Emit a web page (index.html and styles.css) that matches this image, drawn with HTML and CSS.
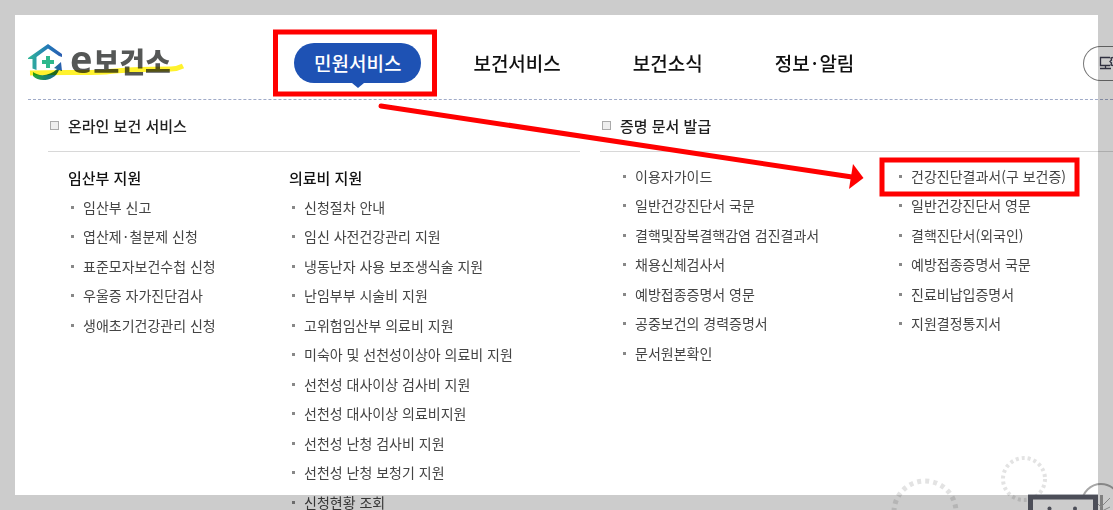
FILE: index.html
```html
<!DOCTYPE html>
<html lang="ko">
<head>
    <meta charset="UTF-8">
    <meta name="viewport" content="width=device-width, initial-scale=1">
    <title>e보건소</title>
    <link rel="stylesheet" href="styles.css">
</head>
<body>

    <header class="header">
        <a href="#" class="logo">
            <svg class="logo-mark" width="36" height="38" viewBox="0 0 36 38" aria-hidden="true">
                <defs>
                    <linearGradient id="roof" x1="0" x2="1"><stop offset="0" stop-color="#32b897"/><stop offset=".6" stop-color="#2277b8"/><stop offset="1" stop-color="#2a5cb0"/></linearGradient>
                    <linearGradient id="swoosh" x1="0" x2="1"><stop offset="0" stop-color="#2bab3c"/><stop offset=".5" stop-color="#167d75"/><stop offset="1" stop-color="#2a5fb4"/></linearGradient>
                </defs>
                <path d="M0 14L20 0L34 10V13L31 12L20 4.500L8.500 13V26L4.500 24.500V15H0Z" fill="url(#roof)"/>
                <path d="M18 12h4v4h4v4h-4v4h-4v-4h-4v-4h4Z" fill="#2eb88c"/>
                <path d="M5 28C11 33 22 32 29 25L26 24L33 18L34 27L31 26C27 37 11 39 5 32Z" fill="url(#swoosh)"/>
            </svg>
            <span class="logo-e">e</span><span class="logo-text">보건소</span>
            <svg class="logo-marker" width="158" height="16" viewBox="0 0 158 16" aria-hidden="true">
                <path d="M2 10C28 9 55 10 78 9C100 6 126 6 143 6Q149 6 155 3" fill="none" stroke="#fff22d" stroke-width="5"/>
            </svg>
        </a>
        <nav class="nav">
            <a href="#" class="nav-item active">민원서비스</a>
            <a href="#" class="nav-item">보건서비스</a>
            <a href="#" class="nav-item">보건소식</a>
            <a href="#" class="nav-item">정보<span class="dot">·</span>알림</a>
        </nav>
        <button type="button" class="screen-button" aria-label="화면">
            <svg width="14" height="14" viewBox="0 0 14 14" fill="none" stroke="#3c3c50" stroke-width="1.300">
                <path d="M11 1.500H1.500V9.500H11M6.500 9.500V12M1 12.500H12"/>
                <path d="M14 1.500L12 2L12.500 4L11 5.500L12.500 7L12 9L14 9.500"/>
            </svg>
        </button>
    </header>

    <main class="menu">
        <section>
            <h2 class="menu-title">온라인 보건 서비스</h2>
            <div class="columns service">
                <div>
                    <h3>임산부 지원</h3>
                    <ul>
                        <li><a href="#">임산부 신고</a></li>
                        <li><a href="#">엽산제<span class="dot">·</span>철분제 신청</a></li>
                        <li><a href="#">표준모자보건수첩 신청</a></li>
                        <li><a href="#">우울증 자가진단검사</a></li>
                        <li><a href="#">생애초기건강관리 신청</a></li>
                    </ul>
                </div>
                <div>
                    <h3>의료비 지원</h3>
                    <ul>
                        <li><a href="#">신청절차 안내</a></li>
                        <li><a href="#">임신 사전건강관리 지원</a></li>
                        <li><a href="#">냉동난자 사용 보조생식술 지원</a></li>
                        <li><a href="#">난임부부 시술비 지원</a></li>
                        <li><a href="#">고위험임산부 의료비 지원</a></li>
                        <li><a href="#">미숙아 및 선천성이상아 의료비 지원</a></li>
                        <li><a href="#">선천성 대사이상 검사비 지원</a></li>
                        <li><a href="#">선천성 대사이상 의료비지원</a></li>
                        <li><a href="#">선천성 난청 검사비 지원</a></li>
                        <li><a href="#">선천성 난청 보청기 지원</a></li>
                        <li><a href="#">신청현황 조회</a></li>
                    </ul>
                </div>
            </div>
        </section>
        <section>
            <h2 class="menu-title">증명 문서 발급</h2>
            <div class="columns document">
                <ul>
                    <li><a href="#">이용자가이드</a></li>
                    <li><a href="#">일반건강진단서 국문</a></li>
                    <li><a href="#">결핵및잠복결핵감염 검진결과서</a></li>
                    <li><a href="#">채용신체검사서</a></li>
                    <li><a href="#">예방접종증명서 영문</a></li>
                    <li><a href="#">공중보건의 경력증명서</a></li>
                    <li><a href="#">문서원본확인</a></li>
                </ul>
                <ul>
                    <li><a href="#">건강진단결과서(구 보건증)</a></li>
                    <li><a href="#">일반건강진단서 영문</a></li>
                    <li><a href="#">결핵진단서(외국인)</a></li>
                    <li><a href="#">예방접종증명서 국문</a></li>
                    <li><a href="#">진료비납입증명서</a></li>
                    <li><a href="#">지원결정통지서</a></li>
                </ul>
            </div>
        </section>
    </main>

    <!-- illustration behind the menu -->
    <svg class="scene" width="233" height="60" viewBox="880 450 233 60" aria-hidden="true">
        <circle cx="925" cy="512" r="31" fill="none" stroke="#e3e3e3" stroke-width="5" stroke-dasharray="4 4.115"/>
        <circle cx="1024" cy="479" r="21" fill="none" stroke="#e3e3e3" stroke-width="4" stroke-dasharray="3 3"/>
        <circle cx="1101" cy="503" r="19" fill="none" stroke="#a8a8a8" stroke-width="2"/>
        <path d="M1101.500 495V510" stroke="#a0a0a0" stroke-width="3"/>
        <path d="M1096 502L1101 507L1110 498M1102 511L1110 507" fill="none" stroke="#a8a8a8"/>
        <rect x="1030.500" y="497" width="65" height="30" fill="#fff" stroke="#5f626f" stroke-width="5"/>
        <circle cx="1049.500" cy="508.500" r="2" fill="#5f626f"/>
        <circle cx="1075" cy="508.500" r="2" fill="#5f626f"/>
    </svg>

    <div class="frame"></div>

    <!-- guide marks -->
    <svg class="guide" width="1113" height="510" viewBox="0 0 1113 510" fill="none" stroke="#f00" stroke-width="5" aria-hidden="true">
        <rect x="275.500" y="32" width="159" height="62"/>
        <rect x="882" y="160" width="195" height="34"/>
        <path d="M381 106L852 177" stroke-linecap="round"/>
        <path d="M853 164L863.500 178L849 189Z" fill="#f00" stroke="none"/>
    </svg>

</body>
</html>
```
FILE: styles.css
```css
* {
    box-sizing: border-box;
}
body {
    margin: 0;
    position: relative;
    height: 100vh;
    overflow: hidden;
    background-color: #fff;
    color: #444;
    font-family: "Noto Sans CJK KR", "Noto Sans", sans-serif;
    font-size: 14px;
}
a {
    color: inherit;
    text-decoration: none;
}
h2, h3, ul {
    margin: 0;
    padding: 0;
}
ul {
    list-style: none;
}
.header {
    display: flex;
    align-items: center;
    height: 100px;
    margin-left: 28px;
    padding-top: 27px;
    border-bottom: 1px dashed #a0abc8;
    white-space: nowrap;
}
.logo {
    position: relative;
    display: flex;
    align-items: center;
    flex: none;
    width: 266px;
    height: 40px;
    color: #555756;
    font-weight: bold;
    line-height: 40px;
}
.logo-mark {
    margin-right: 6px;
}
.logo-e {
    font-family: "Open Sans", sans-serif;
    font-size: 38px;
    line-height: 32px;
    padding-bottom: 10px;
}
.logo-text {
    margin-left: 1px;
    padding-bottom: 4px;
    font-size: 28px;
    font-weight: 900;
}
.logo-marker {
    position: absolute;
    left: 0;
    bottom: 4px;
    mix-blend-mode: multiply;
}
.nav {
    display: flex;
    gap: 32px;
}
.nav-item {
    position: relative;
    padding: 0 20px;
    border-radius: 20px;
    color: #111;
    font-size: 19px;
    font-weight: 500;
    line-height: 40px;
}
.nav-item.active {
    background-color: #1e52b4;
    color: #fff;
}
.nav-item.active::after {
    content: "";
    position: absolute;
    top: 100%;
    left: 50%;
    margin-left: -6px;
    border: 6px solid transparent;
    border-top: 5px solid #1e52b4;
    border-bottom: 0;
}
.dot {
    margin: 0 2px;
}
.screen-button {
    display: flex;
    align-items: center;
    flex: 1;
    height: 35px;
    margin-left: 209px;
    padding: 0 0 0 15px;
    border: 1px solid #777;
    border-right: 0;
    border-radius: 18px 0 0 18px;
    background-color: transparent;
}
.menu {
    display: grid;
    grid-template-columns: 28fr 27fr;
    gap: 20px;
    margin-left: 48px;
}
.menu-title {
    display: flex;
    align-items: center;
    gap: 9px;
    height: 52px;
    padding-left: 2px;
    border-bottom: 1px solid #d8d8d8;
    color: #222;
    font-size: 15px;
    font-weight: 500;
}
.menu-title::before {
    content: "";
    width: 7px;
    height: 7px;
    border: 1px solid #aaa;
    background-color: #eee;
}
.columns {
    display: grid;
    padding: 10px 0 0 20px;
    white-space: nowrap;
}
.service {
    grid-template-columns: 221px 1fr;
}
.document {
    grid-template-columns: 276px 1fr;
}
h3 {
    color: #111;
    font-size: 15px;
    font-weight: 500;
    line-height: 31px;
}
li {
    display: flex;
    align-items: center;
    gap: 9px;
    padding-left: 3px;
    line-height: 29px;
}
li:nth-child(even) {
    padding-bottom: 1px;
}
li::before {
    content: "";
    width: 3px;
    height: 3px;
    background-color: #888;
}
.scene {
    position: absolute;
    right: 0;
    bottom: 0;
}
.frame {
    position: absolute;
    inset: 0;
    border: 15px solid rgba(0, 0, 0, 0.2);
    pointer-events: none;
}
.guide {
    position: absolute;
    top: 0;
    left: 0;
    pointer-events: none;
}
```
